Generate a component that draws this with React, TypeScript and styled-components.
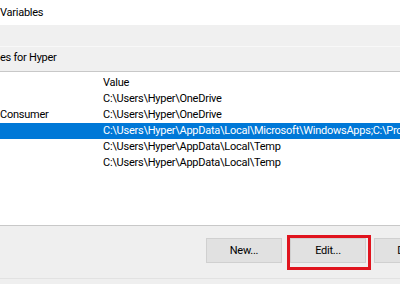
import React from "react";
import styled, { createGlobalStyle } from "styled-components";

const Global = createGlobalStyle`
  html, body {
    margin: 0;
    padding: 0;
    width: 400px;
    height: 284px;
    overflow: hidden;
    background: #f0f0f0;
    font-family: Roboto, "Liberation Sans", sans-serif;
    font-size: 11px;
    letter-spacing: -0.25px;
    color: #000;
  }
`;

interface IVar {
  name: string;
  value: string;
  selected?: boolean;
}

const vars: IVar[] = [
  { name: "", value: "C:\\Users\\Hyper\\OneDrive" },
  { name: "Consumer", value: "C:\\Users\\Hyper\\OneDrive" },
  {
    name: "",
    value:
      "C:\\Users\\Hyper\\AppData\\Local\\Microsoft\\WindowsApps;C:\\Program Files\\Git\\cmd",
    selected: true,
  },
  { name: "", value: "C:\\Users\\Hyper\\AppData\\Local\\Temp" },
  { name: "", value: "C:\\Users\\Hyper\\AppData\\Local\\Temp" },
];

const Dialog = styled.div`
  width: 400px;
  height: 284px;
  display: flex;
  flex-direction: column;
  overflow: hidden;
`;

const TitleBar = styled.div`
  height: 25px;
  background: #fff;
  line-height: 16px;
  padding-top: 5px;
  box-sizing: border-box;
  white-space: nowrap;
`;

const GroupHead = styled.div`
  height: 47px;
  background: #f0f0f0;
  border-bottom: 1px solid #c8c8c8;
  box-sizing: border-box;
  display: flex;
  flex-direction: column;
  justify-content: flex-end;
`;

const GroupLine = styled.div`
  height: 1px;
  background: #f8f8f8;
`;

const GroupLabel = styled.div`
  line-height: 16px;
  padding: 3px 0 5px;
  white-space: nowrap;
`;

const List = styled.div`
  height: 153px;
  background: #fff;
  padding-top: 3px;
  box-sizing: border-box;
  overflow: hidden;
`;

const Row = styled.div<{ $selected?: boolean }>`
  height: 16px;
  line-height: 16px;
  display: grid;
  grid-template-columns: 103px 1fr;
  white-space: nowrap;
  background: ${(p) => (p.$selected ? "#0078d7" : "transparent")};
  color: ${(p) => (p.$selected ? "#fff" : "#000")};
`;

const Cell = styled.span`
  overflow: hidden;
`;

const Footer = styled.div`
  flex: 1;
  background: #efefef;
  border-top: 1px solid #c8c8c8;
  display: flex;
  flex-direction: column;
`;

const ButtonRow = styled.div`
  height: 53px;
  display: flex;
  gap: 8px;
  padding: 12px 0 0 206px;
  box-sizing: border-box;
  border-bottom: 1px solid #e2e2e2;
`;

const Button = styled.button<{ $marked?: boolean }>`
  position: relative;
  flex: none;
  width: 76px;
  height: 25px;
  background: #e1e1e1;
  border: 1px solid #d0d0d0;
  font-family: inherit;
  font-size: 11px;
  letter-spacing: -0.25px;
  color: #000;
  padding: 0;
  white-space: nowrap;
  ${(p) =>
    p.$marked &&
    `
    &::after {
      content: "";
      position: absolute;
      left: -4px;
      top: -4px;
      width: 78px;
      height: 29px;
      border: 3px solid #e0141e;
    }
  `}
`;

const App: React.FC = () => {
  return (
    <Dialog>
      <Global />
      <TitleBar>Variables</TitleBar>
      <GroupHead>
        <GroupLine />
        <GroupLabel>es for Hyper</GroupLabel>
      </GroupHead>
      <List>
        <Row>
          <Cell />
          <Cell>Value</Cell>
        </Row>
        {vars.map((v, i) => (
          <Row key={i} $selected={v.selected}>
            <Cell>{v.name}</Cell>
            <Cell>{v.value}</Cell>
          </Row>
        ))}
      </List>
      <Footer>
        <ButtonRow>
          <Button>New...</Button>
          <Button $marked>Edit...</Button>
          <Button>Delete</Button>
        </ButtonRow>
      </Footer>
    </Dialog>
  );
};

export default App;
